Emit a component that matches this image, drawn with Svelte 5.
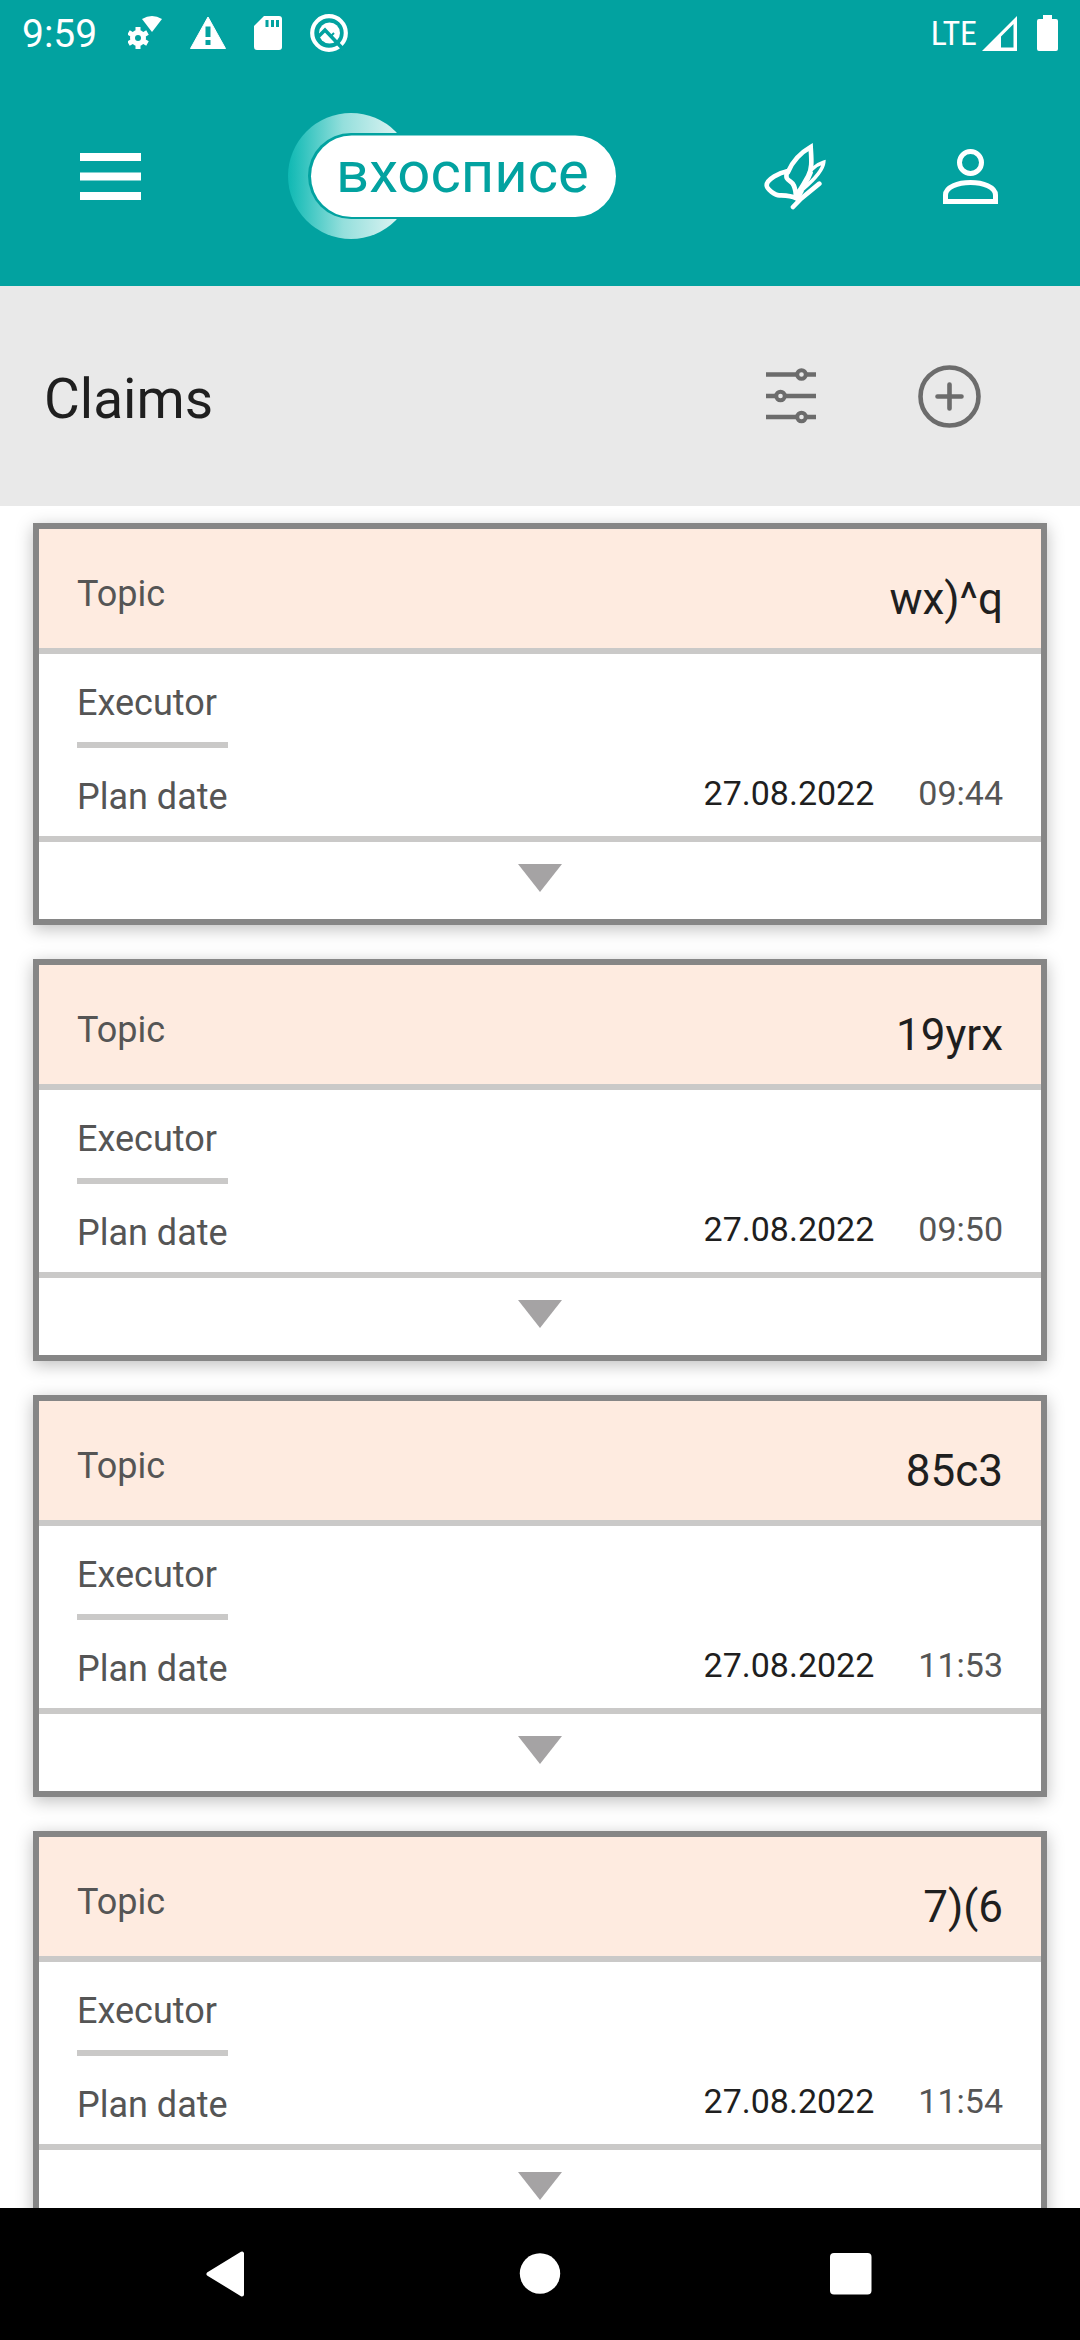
<script>
  const claims = [
    { topic: 'wx)^q', date: '27.08.2022', time: '09:44' },
    { topic: '19yrx', date: '27.08.2022', time: '09:50' },
    { topic: '85c3', date: '27.08.2022', time: '11:53' },
    { topic: '7)(6', date: '27.08.2022', time: '11:54' }
  ];
</script>

<div class="screen">
  <div class="status">
    <span class="clock">9:59</span>
    <div class="notices">
      <svg width="34" height="34" viewBox="0 0 34 34">
        <path d="M14 3Q24-3 34 3L24 16Z" fill="#fff" />
        <circle cx="10" cy="22" r="8" fill="#fff" />
        <path d="M10 11v22M.5 16.5l19 11M.5 27.5l19-11" stroke="#fff" stroke-width="5" />
        <circle cx="10" cy="22" r="3" fill="#02a2a0" />
      </svg>
      <svg width="36" height="34" viewBox="0 0 36 34">
        <path d="M18 1L35.5 32.500H.5Z" fill="#fff" stroke="#fff" stroke-linejoin="round" />
        <path d="M18 10.500v10.500M18 24v5" stroke="#02a2a0" stroke-width="5" />
      </svg>
      <svg width="28" height="34" viewBox="0 0 28 34">
        <path d="M10 0h15q3 0 3 3v28q0 3-3 3H3q-3 0-3-3V10Z" fill="#fff" />
        <path d="M13 4v7M18.500 4v7M23.500 4v7" stroke="#02a2a0" stroke-width="3" />
      </svg>
      <svg width="38" height="38" viewBox="0 0 38 38">
        <circle cx="19" cy="19" r="16.800" fill="none" stroke="#fff" stroke-width="4.200" />
        <circle cx="19.500" cy="19" r="10.500" fill="#fff" />
        <path d="M7 24L15 16L34 36" fill="none" stroke="#02a2a0" stroke-width="3.600" />
        <path d="M20 23L24 19" stroke="#02a2a0" stroke-width="2" />
      </svg>
    </div>
    <span class="network">LTE</span>
    <svg class="signal" width="35" height="35" viewBox="0 0 35 35">
      <path d="M35 0V35H0ZM31.500 8L19 20.500V31.500H31.500Z" fill="#fff" fill-rule="evenodd" />
    </svg>
    <svg width="21" height="36" viewBox="0 0 21 36">
      <path d="M6 0h9v4h4q2 0 2 2v28q0 2-2 2H2q-2 0-2-2V6q0-2 2-2h4Z" fill="#fff" />
    </svg>
  </div>

  <header class="appbar">
    <button class="menu" aria-label="Menu">
      <svg width="61" height="48" viewBox="0 0 61 48">
        <path d="M0 5h61M0 24.500h61M0 44h61" stroke="#fff" stroke-width="8" />
      </svg>
    </button>
    <a class="logo" href="#home" aria-label="вхосписе">
      <svg width="328" height="126" viewBox="0 0 328 126">
        <defs>
          <linearGradient id="crescent" gradientUnits="userSpaceOnUse" x1="0" y1="0" x2="110" y2="0">
            <stop offset="0" stop-color="#0fb8b3" />
            <stop offset=".12" stop-color="#2cc2bd" />
            <stop offset=".5" stop-color="#94dfdc" />
            <stop offset="1" stop-color="#dcf3f2" />
          </linearGradient>
        </defs>
        <circle cx="63" cy="63" r="63" fill="url(#crescent)" />
        <rect x="20" y="20" width="308" height="86" rx="43" fill="#02a2a0" />
        <rect x="23" y="22.500" width="305" height="81.500" rx="40.700" fill="#fff" />
        <text x="48" y="79" font-family="Roboto, sans-serif" font-size="58" fill="#02a2a0">вхосписе</text>
      </svg>
    </a>
    <nav class="actions">
      <button aria-label="Our mission">
        <svg width="63" height="68" viewBox="70 66 189 204" fill="none" stroke="#fff" stroke-width="14" stroke-linejoin="miter" stroke-linecap="round">
          <path d="M142 153C116 158 78 178 78 196C78 208 104 226 116 226C136 227 150 227 166 234" />
          <path d="M140 154C133 174 139 178 150 185C162 193 162 204 166 222" />
          <path d="M142 156C155 125 180 98 210 81C212 115 216 145 202 169C194 184 184 201 170 222" />
          <path d="M213 148C225 137 236 131 249 127C247 150 226 174 186 208" stroke-width="11" />
          <path d="M213 158C205 180 192 200 172 220" stroke-width="8" />
          <path d="M236 191L181 236L157 261" />
          <path d="M160 206L190 214L172 246L158 236Z" fill="#fff" stroke="none" />
        </svg>
      </button>
      <button aria-label="Profile">
        <svg width="55" height="55" viewBox="0 0 55 55" fill="none" stroke="#fff" stroke-width="5">
          <circle cx="27.500" cy="13.500" r="11" />
          <path d="M2.500 52.500V46C2.500 38 15 33.500 27.500 33.500S52.500 38 52.500 46V52.500Z" />
        </svg>
      </button>
    </nav>
  </header>

  <section class="titlebar">
    <h1>Claims</h1>
    <div class="tools">
      <button aria-label="Filter">
        <svg width="50" height="56" viewBox="0 0 50 56" fill="none" stroke="#6c6c6c" stroke-width="4.500">
          <path d="M0 6.500h31M40 6.500h10M0 28h10M19 28h31M0 49h31M40 49h10" />
          <circle cx="35.500" cy="6.500" r="4.300" stroke-width="4" />
          <circle cx="14.500" cy="28" r="4.300" stroke-width="4" />
          <circle cx="35.500" cy="49" r="4.300" stroke-width="4" />
        </svg>
      </button>
      <button aria-label="Add claim">
        <svg width="63" height="63" viewBox="0 0 63 63" fill="none" stroke="#6c6c6c" stroke-width="4.600" stroke-linecap="round">
          <circle cx="31.500" cy="31.500" r="29" />
          <path d="M31.500 19.500v24M19.500 31.500h24" />
        </svg>
      </button>
    </div>
  </section>

  <main>
    {#each claims as claim}
      <article>
        <div class="topic">
          <span class="label">Topic</span>
          <span class="value">{claim.topic}</span>
        </div>
        <div class="details">
          <span class="label executor">Executor</span>
          <span></span>
          <span class="label">Plan date</span>
          <div class="when">
            <span>{claim.date}</span>
            <time>{claim.time}</time>
          </div>
        </div>
        <button class="expand" aria-label="Open claim">
          <svg width="44" height="28" viewBox="0 0 44 28"><path d="M0 0H44L22 28Z" fill="#a5a3a4" /></svg>
        </button>
      </article>
    {/each}
  </main>

  <nav class="system">
    <button aria-label="Back">
      <svg width="44" height="46" viewBox="0 0 44 46"><path d="M36 2.500V43.500L2.500 23Z" fill="#fff" stroke="#fff" stroke-width="4" stroke-linejoin="round" /></svg>
    </button>
    <button aria-label="Home">
      <svg width="44" height="46" viewBox="0 0 44 46"><circle cx="22" cy="22.500" r="20.200" fill="#fff" /></svg>
    </button>
    <button aria-label="Recent apps">
      <svg width="44" height="46" viewBox="0 0 44 46"><rect y="2" width="41.500" height="41.500" rx="4" fill="#fff" /></svg>
    </button>
  </nav>
</div>

<style>
  :global(body) { margin: 0; background: #fff; }
  .screen {
    display: flex;
    flex-direction: column;
    height: 100vh;
    font-family: Roboto, sans-serif;
    background: #fff;
  }
  svg { display: block; }
  button {
    padding: 0;
    border: 0;
    background: none;
    cursor: pointer;
  }
  .status {
    flex: none;
    display: flex;
    align-items: center;
    height: 66px;
    padding: 0 22px;
    background: #02a2a0;
    color: #fff;
  }
  .clock { font-size: 39px; line-height: 46px; padding-top: 2px; }
  .notices {
    display: flex;
    align-items: center;
    gap: 28px;
    margin: 0 auto 0 31px;
  }
  .network {
    font-family: "Roboto Condensed", "Liberation Sans Narrow", Roboto, sans-serif;
    font-size: 34px;
    font-weight: 400;
    line-height: 40px;
  }
  .signal { margin: 0 20px 0 5px; }
  .appbar {
    flex: none;
    display: flex;
    align-items: center;
    height: 220px;
    padding: 0 82px 0 80px;
    background: #02a2a0;
  }
  .logo { margin: 0 auto 0 147px; }
  .actions { display: flex; align-items: center; gap: 116px; }
  .titlebar {
    flex: none;
    display: flex;
    align-items: center;
    justify-content: space-between;
    height: 220px;
    padding: 0 99px 0 44px;
    background: #e9e9e9;
  }
  h1 {
    margin: 0;
    padding-top: 6px;
    font-size: 55px;
    font-weight: 400;
    line-height: 64px;
    color: #1f1f1f;
  }
  .tools { display: flex; align-items: center; gap: 102px; }
  main {
    flex: 1;
    min-height: 0;
    display: flex;
    flex-direction: column;
    gap: 34px;
    padding: 17px 33px 0;
    overflow: auto;
    scrollbar-width: none;
  }
  article {
    flex: none;
    border: 6px solid #868686;
    background: #fff;
    box-shadow: 0 4px 16px rgba(0, 0, 0, 0.26);
  }
  .topic {
    display: flex;
    align-items: flex-start;
    justify-content: space-between;
    padding: 44px 38px 23px;
    border-bottom: 6px solid #cac9c8;
    background: #feebe0;
  }
  .label { font-size: 36px; line-height: 42px; color: #555; }
  .value { font-size: 44px; line-height: 52px; color: #1f1f1f; }
  .details {
    display: grid;
    grid-template-columns: max-content 1fr;
    padding: 0 38px;
    border-bottom: 6px solid #cac9c8;
  }
  .details .label { padding: 28px 0 18px; }
  .details .executor { border-bottom: 6px solid #cac9c8; }
  .when {
    display: flex;
    justify-content: flex-end;
    gap: 44px;
    padding-top: 24px;
    font-size: 34px;
    line-height: 42px;
    color: #1f1f1f;
  }
  time { color: #555; }
  .expand {
    display: flex;
    justify-content: center;
    width: 100%;
    padding: 22px 0 27px;
  }
  .system {
    flex: none;
    display: flex;
    align-items: center;
    justify-content: space-between;
    height: 132px;
    padding: 0 206px;
    background: #000;
  }
</style>
